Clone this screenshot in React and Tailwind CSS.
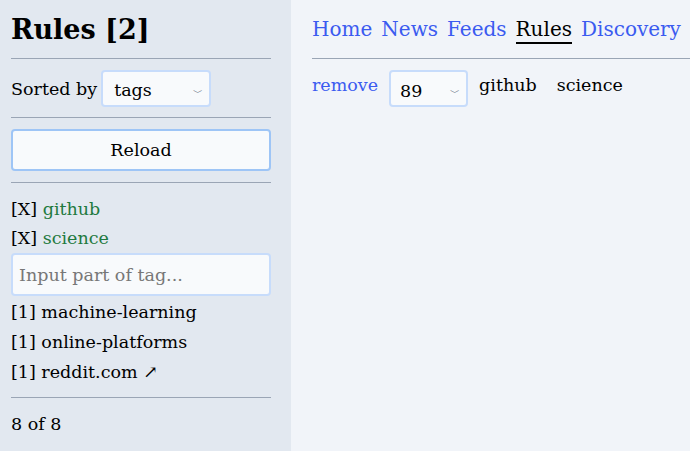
const font = { fontFamily: 'Georgia, "DejaVu Serif", serif' }

function Hr({ className = '' }) {
  return <div className={`h-px bg-[#9aa5b5] ${className}`} />
}

function Sidebar() {
  return (
    <div className="w-[291px] shrink-0 bg-[#e2e8f0] px-[11px] pt-[13px] min-h-screen">
      <h1 className="text-[27px] font-bold leading-[34px] text-black">Rules [2]</h1>
      <Hr className="mt-[11px] mr-[9px]" />
      <div className="flex items-center gap-[4px] mt-[11px]">
        <span>Sorted by</span>
        <div className="relative w-[110px] h-[37px] rounded-[4px] border-2 border-[#c7dcfb] bg-[#f8fafc]">
          <span className="absolute left-[11px] top-[3px]">tags</span>
          <span className="absolute right-[6px] top-[6px] text-[10px] text-gray-500">﹀</span>
        </div>
      </div>
      <Hr className="mt-[10px] mr-[9px]" />
      <button className="mt-[11px] w-[260px] h-[42px] rounded-[4px] border-2 border-[#9ec5f6] bg-[#f8fafc] text-black">
        Reload
      </button>
      <Hr className="mt-[11px] mr-[9px]" />
      <div className="mt-[12px] leading-[29px]">
        <div>[X] <span className="text-[#1f7a3f]">github</span></div>
        <div>[X] <span className="text-[#1f7a3f]">science</span></div>
      </div>
      <div className="w-[260px] h-[43px] rounded-[4px] border-2 border-[#c7dcfb] bg-[#f8fafc] flex items-center px-[6px] text-[#777]">
        Input part of tag...
      </div>
      <div className="mt-[1px] leading-[30px]">
        <div>[1] machine-learning</div>
        <div>[1] online-platforms</div>
        <div>[1] reddit.com ↗</div>
      </div>
      <Hr className="mt-[10px] mr-[9px]" />
      <div className="mt-[11px]">8 of 8</div>
    </div>
  )
}

function Main() {
  const links = ['Home', 'News', 'Feeds', 'Rules', 'Discovery']
  return (
    <div className="flex-1 bg-[#f1f4f9] pl-[21px] pt-[11px]">
      <nav className="flex gap-[9px] h-[36px] items-center text-[20px]">
        {links.map((l) =>
          l === 'Rules' ? (
            <span key={l} className="text-black border-b-2 border-black leading-[26px] mt-[2px]">{l}</span>
          ) : (
            <span key={l} className="text-[#3b5bf0]">{l}</span>
          )
        )}
      </nav>
      <Hr className="mt-[11px]" />
      <div className="flex items-center mt-[11px] gap-[11px]">
        <span className="text-[#3b5bf0] -mt-[7px]">remove</span>
        <div className="relative w-[79px] h-[37px] rounded-[4px] border-2 border-[#c7dcfb] bg-[#f8fafc]">
          <span className="absolute left-[9px] top-[4px]">89</span>
          <span className="absolute right-[6px] top-[6px] text-[10px] text-gray-500">﹀</span>
        </div>
        <span className="-mt-[7px]">github</span>
        <span className="ml-[9px] -mt-[7px]">science</span>
      </div>
    </div>
  )
}

export default function App() {
  return (
    <div className="flex w-[690px] h-[451px] overflow-hidden text-[17.5px] leading-[30px] text-black" style={font}>
      <Sidebar />
      <Main />
    </div>
  )
}
